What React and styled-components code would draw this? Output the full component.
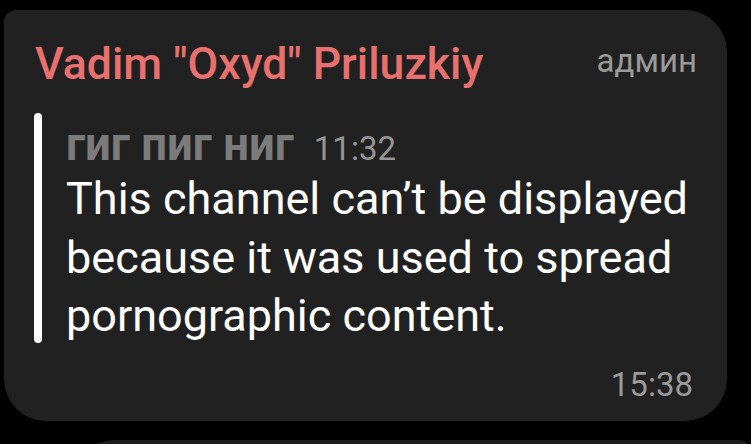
import React from 'react';
import styled, { createGlobalStyle } from 'styled-components';

const GlobalStyle = createGlobalStyle`
  html, body {
    margin: 0;
    padding: 0;
    background: #000;
    font-family: Roboto, "Noto Sans", sans-serif;
    overflow: hidden;
  }
`;

const Page = styled.div`
  width: 751px;
  height: 444px;
  padding: 10px 0 0 4px;
  box-sizing: border-box;
  display: flex;
  flex-direction: column;
  gap: 19px;
  overflow: hidden;
`;

const Bubble = styled.div`
  width: 723px;
  height: 411px;
  flex-shrink: 0;
  box-sizing: border-box;
  background: #212121;
  border-radius: 12px 42px 42px 42px;
  padding: 26px 34px 0 31px;
  display: flex;
  flex-direction: column;
`;

const NextBubble = styled.div`
  margin-left: 70px;
  width: 677px;
  height: 40px;
  flex-shrink: 0;
  background: #1c1c1c;
  border-radius: 40px 12px 0 0;
`;

const Header = styled.div`
  display: flex;
  justify-content: space-between;
  align-items: flex-start;
`;

const Author = styled.span`
  color: #e8716f;
  font-size: 44.6px;
  font-weight: 500;
  line-height: 56px;
`;

const Role = styled.span`
  color: #9a9a9a;
  font-size: 33px;
  line-height: 40px;
  margin: 5px -4px 0 0;
`;

const Reply = styled.div`
  display: flex;
  gap: 24px;
  margin: 21px 0 0 -1px;
`;

const ReplyBar = styled.div`
  width: 8px;
  flex-shrink: 0;
  margin-bottom: 3px;
  background: #fff;
  border-radius: 4px;
`;

const ReplyBody = styled.div`
  display: flex;
  flex-direction: column;
`;

const ReplyMeta = styled.div`
  display: flex;
  align-items: baseline;
  gap: 20px;
  height: 44px;
  line-height: 44px;
  margin-top: 10px;
`;

const ReplyName = styled.span`
  color: #7b7b7b;
  font-size: 45.5px;
  font-weight: 700;
`;

const ReplyTime = styled.span`
  color: #959595;
  font-size: 33px;
`;

const ReplyText = styled.div`
  color: #fff;
  font-size: 45px;
  line-height: 58.5px;
  margin-top: 3px;
`;

const Footer = styled.div`
  display: flex;
  justify-content: flex-end;
  margin-top: 19px;
`;

const Time = styled.span`
  color: #9a9a9a;
  font-size: 33px;
  line-height: 40px;
`;

export default function App() {
  return (
    <>
      <GlobalStyle />
      <Page>
        <Bubble>
          <Header>
            <Author>Vadim "Oxyd" Priluzkiy</Author>
            <Role>админ</Role>
          </Header>
          <Reply>
            <ReplyBar />
            <ReplyBody>
              <ReplyMeta>
                <ReplyName>гиг пиг ниг</ReplyName>
                <ReplyTime>11:32</ReplyTime>
              </ReplyMeta>
              <ReplyText>
                This channel can’t be displayed
                <br />
                because it was used to spread
                <br />
                pornographic content.
              </ReplyText>
            </ReplyBody>
          </Reply>
          <Footer>
            <Time>15:38</Time>
          </Footer>
        </Bubble>
        <NextBubble />
      </Page>
    </>
  );
}
